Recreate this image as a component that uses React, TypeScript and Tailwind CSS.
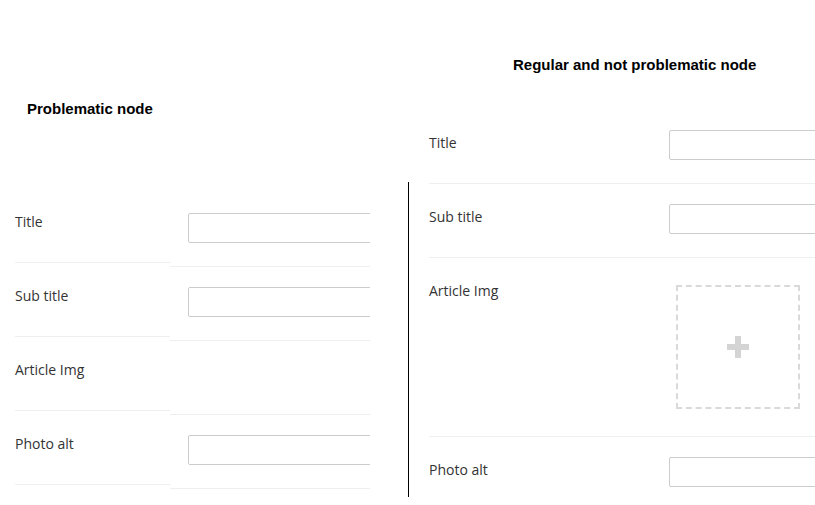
import React from 'react';

const LABEL = "text-[14px] leading-[20px] text-[#333] font-['Open_Sans',sans-serif]";

const TextInput = () => (
  <input type="text" className="block h-[30px] w-[220px] shrink-0 rounded-[2px] border border-[#ccc] bg-white" />
);

const PlusBox = () => (
  <div className="ml-[7px] mt-[7px] flex h-[124px] w-[124px] items-center justify-center border-2 border-dashed border-[#d9d9d9]">
    <svg width="22" height="22" viewBox="0 0 22 22">
      <rect x="8" y="0" width="6" height="22" fill="#d4d4d4" />
      <rect x="0" y="8" width="22" height="6" fill="#d4d4d4" />
    </svg>
  </div>
);

// left node: labels and controls live in two separate stacks that drift apart by 4px
const ProblematicNode = () => {
  const fields = ['Title', 'Sub title', 'Article Img', 'Photo alt'];
  const hasInput = [true, true, false, true];

  return (
    <div className="w-[409px] shrink-0">
      <h3 className="pl-[27px] pt-[100px] text-[15px] leading-[18px] font-bold text-black font-['Liberation_Sans',Arial,sans-serif]">
        Problematic node
      </h3>
      <div className="mt-[64px] flex h-[315px] border-r border-black">
        <div className="ml-[15px] w-[155px] pt-[7px]">
          {fields.map(f => (
            <div key={f} className="h-[74px] border-b border-[#efefef] pt-[20px]">
              <span className={LABEL}>{f}</span>
            </div>
          ))}
        </div>
        <div className="w-[200px] overflow-hidden pt-[11px]">
          {hasInput.map((show, i) => (
            <div key={i} className="h-[74px] border-b border-[#efefef] pl-[18px] pt-[20px]">
              {show && <TextInput />}
            </div>
          ))}
        </div>
      </div>
    </div>
  );
};

const Row = ({ label, children, height }: { label: string; children: React.ReactNode; height: string }) => (
  <div className={`flex border-b border-[#efefef] ${height}`}>
    <div className="w-[222px] shrink-0 pt-[20px]">
      <span className={LABEL}>{label}</span>
    </div>
    <div className="pl-[18px] pt-[20px]">{children}</div>
  </div>
);

const RegularNode = () => (
  <div className="w-[460px] shrink-0">
    <h3 className="pl-[104px] pt-[56px] text-[15px] leading-[18px] font-bold text-black font-['Liberation_Sans',Arial,sans-serif]">
      Regular and not problematic node
    </h3>
    <div className="ml-[20px] mt-[36px]">
      <Row label="Title" height="h-[74px]"><TextInput /></Row>
      <Row label="Sub title" height="h-[74px]"><TextInput /></Row>
      <Row label="Article Img" height="h-[179px]"><PlusBox /></Row>
      <Row label="Photo alt" height="h-[74px]"><TextInput /></Row>
    </div>
  </div>
);

export default function App() {
  return (
    <div className="flex h-[505px] w-[815px] overflow-hidden bg-white">
      <ProblematicNode />
      <RegularNode />
    </div>
  );
}
